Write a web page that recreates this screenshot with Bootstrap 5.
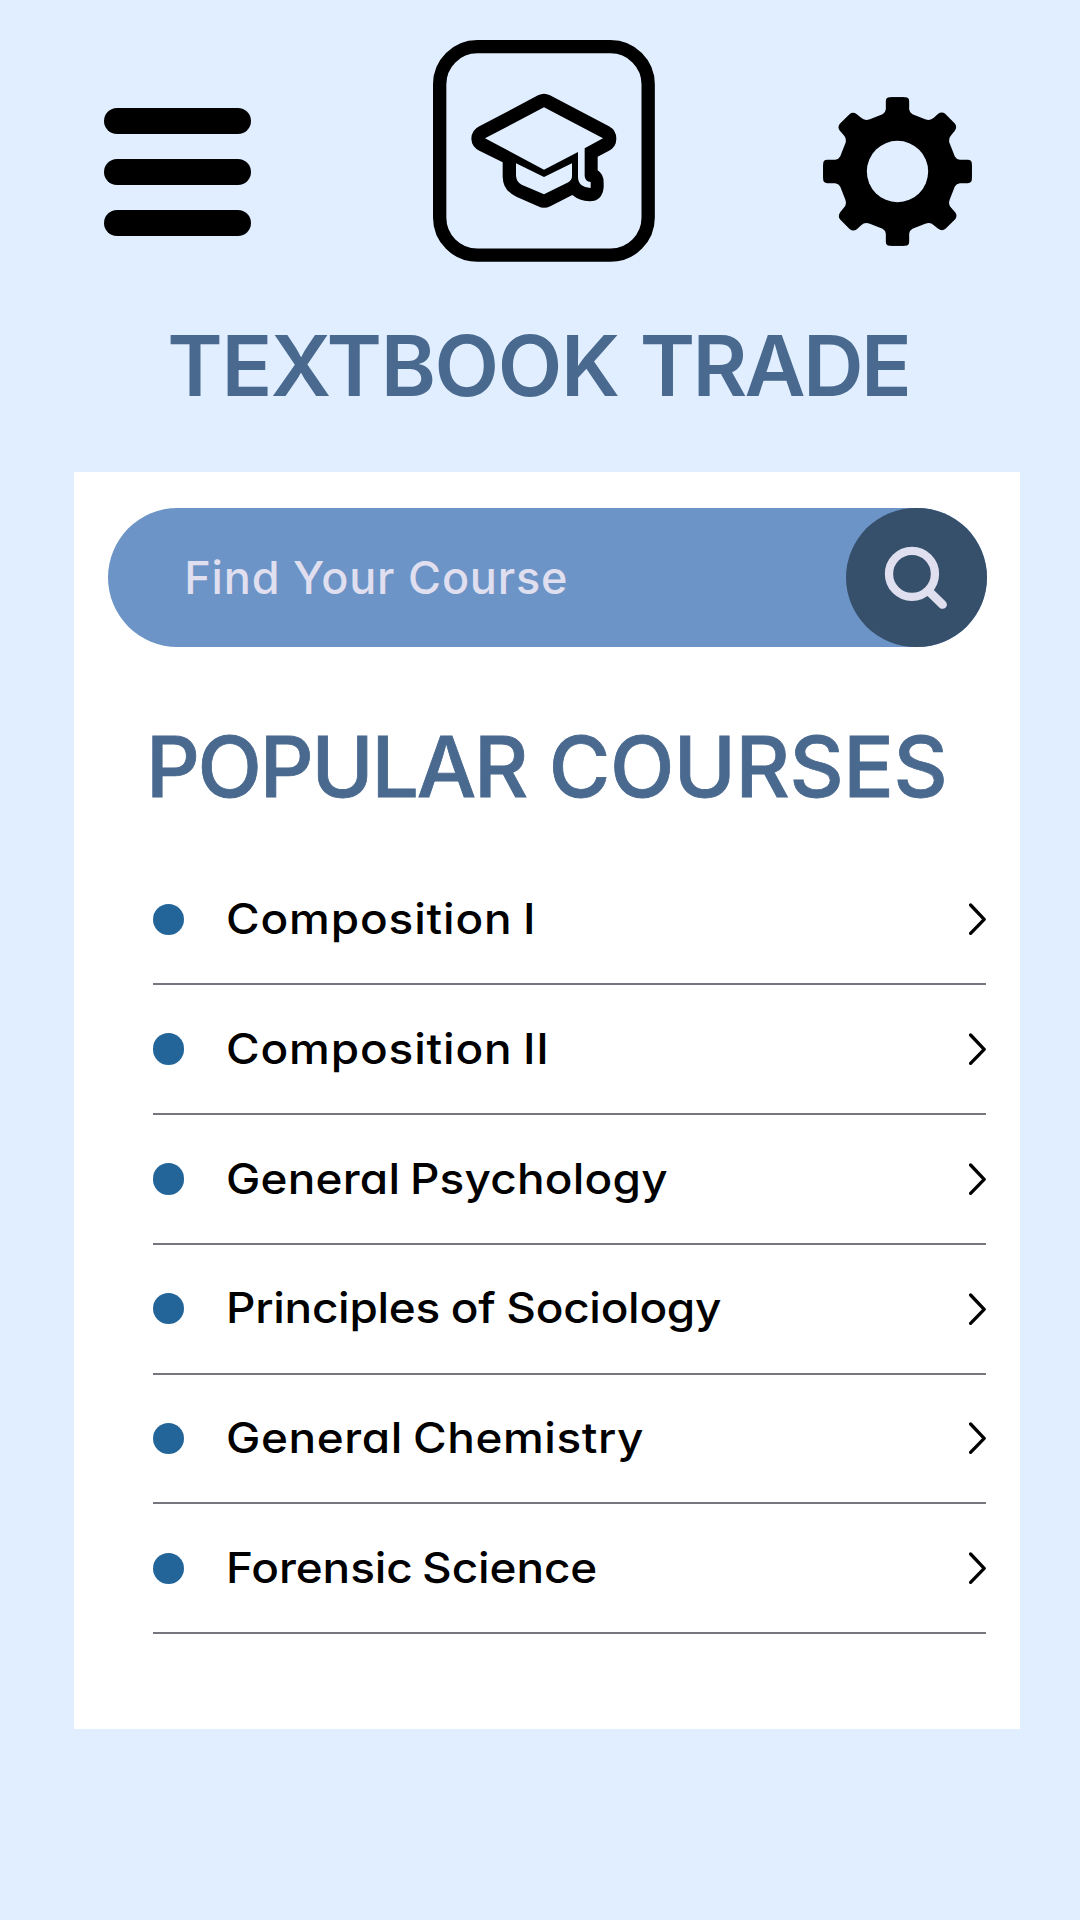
<!DOCTYPE html>
<html lang="en">
<head>
<meta charset="utf-8">
<meta name="viewport" content="width=device-width, initial-scale=1">
<title>Textbook Trade</title>
<link href="https://cdn.jsdelivr.net/npm/bootstrap@5.3.0/dist/css/bootstrap.min.css" rel="stylesheet">
<style>
  body { background: #e0eeff; font-family: Inter, "Liberation Sans", sans-serif; font-weight: 500; min-height: 1920px; color: #000; }
  svg { display: block; }
  .top-bar { padding: 40px 108px 0 104.4px; height: 262px; }
  .menu-btn { width: 146.8px; margin-top: 68px; }
  .menu-btn span { display: block; height: 26px; border-radius: 13px; background: #000; }
  .menu-btn span + span { margin-top: 25px; }
  .logo-mark { margin-left: 14.500px; }
  .gear-btn { margin-top: 56.500px; }
  .gear-btn, .logo-mark { flex: none; }
  .heading { color: #49698e; font-size: 84px; line-height: 84px; white-space: nowrap; }
  .app-title { font-weight: 600; margin: 61.5px 0 0; padding-right: 3.5px; }
  .app-title .first { letter-spacing: -1.4px; }
  .app-title .second { letter-spacing: -2.7px; }
  .panel { background: #fff; width: 946px; height: 1257px; margin: 64px 0 0 74px; padding: 36px 33.5px 0 33.8px; }
  .search-box { background: #6c94c6; height: 139.8px; }
  .search-box input, .search-box input:focus { background: transparent; font-size: 45px; font-weight: 500; letter-spacing: .8px; padding: 0 0 0 76.5px; color: #e0dfef; }
  .search-box input::placeholder { color: #e0dfef; opacity: 1; }
  .search-btn { width: 140.6px; height: 139.8px; background: #36506b; }
  .sub-title { font-weight: 500; -webkit-text-stroke: .8px #49698e; margin: 78px 0 0; padding-right: 1px; }
  .sub-title .first { letter-spacing: -2.2px; }
  .sub-title .second { letter-spacing: -.45px; }
  .course-list { margin: 46.1px .4px 0 44.9px; }
  .course { height: 129.8px; border-bottom: 2px solid #77757d; font-size: 42.5px; line-height: 1; }
  .course, .course:hover { color: #000; }
  .dot { width: 31.4px; height: 31.4px; background: #236599; margin-right: 42.2px; flex: none; }
  /* wide, single-storey letterforms for the course names */
  .course-name { font-feature-settings: "cv11"; transform: scaleX(1.08); transform-origin: left center; letter-spacing: .8px; word-spacing: -2.5px; margin-right: auto; }
  .ls-psy { letter-spacing: .2px; }
  .ls-soc { letter-spacing: -.25px; word-spacing: -1px; }
  .ls-chem { letter-spacing: .55px; }
  .ls-for { letter-spacing: -.08px; }
</style>
</head>
<body>
<header class="top-bar d-flex justify-content-between align-items-start">
  <button class="menu-btn border-0 bg-transparent p-0" aria-label="Menu"><span></span><span></span><span></span></button>
  <svg class="logo-mark" width="222" height="222" viewBox="40 30 666 666" aria-hidden="true">
    <rect x="60" y="50" width="625.500" height="625.500" rx="113" fill="none" stroke="#000" stroke-width="40"/>
    <path d="M355,196Q373,187 391,196L568,289Q590,301 590,326Q590,350 568,362L534,380V421Q552,432 552,458V472Q548,514 510,514Q478,512 458,495L392,529Q373,538 355,529L290,500Q250,482 249,440V397L179,362Q156,350 155,326Q156,300 179,289Z"/>
    <path fill="#e0eeff" d="M373,232L550,325L495,355V438Q496,455 513,456V474Q476,472 475,442V366L373,419L196,325Z"/>
    <path fill="#e0eeff" d="M289,400L373,441L457,400V438Q457,450 446,457L373,493L306,464Q289,455 289,435Z"/>
  </svg>
  <svg class="gear-btn" width="149" height="149" viewBox="-223.500 -223.500 447 447" aria-hidden="true">
    <defs><path id="quarter" d="M-20-223H23.500Q35-223 35-211V-187Q36-177 45-172L83-157Q98-151 109-161L122-173Q133-181 143-173L172-144Q180-134 172-122L161-109Q151-98 157-83L172-45Q177-36 187-35H211Q223-35 223-23.500V20H-20Z"/></defs>
    <use href="#quarter"/><use href="#quarter" transform="rotate(90)"/><use href="#quarter" transform="rotate(180)"/><use href="#quarter" transform="rotate(270)"/>
    <circle r="92" fill="#e0eeff"/>
  </svg>
</header>

<h1 class="heading app-title text-center"><span class="first">TEXTBOOK</span> <span class="second">TRADE</span></h1>

<main class="panel">
  <form class="search-box rounded-pill d-flex align-items-center">
    <input class="form-control border-0 shadow-none rounded-0" type="text" placeholder="Find Your Course" aria-label="Find Your Course">
    <button type="button" class="search-btn rounded-circle border-0 p-0 flex-shrink-0" aria-label="Search">
      <svg width="140.600" height="139.800" viewBox="0 0 422 420" fill="none" stroke="#e0dfef">
        <circle cx="198" cy="198" r="69" stroke-width="25"/>
        <path d="M253 254L290 290" stroke-width="26" stroke-linecap="round"/>
      </svg>
    </button>
  </form>

  <h2 class="heading sub-title text-center"><span class="first">POPULAR</span> <span class="second">COURSES</span></h2>

  <nav class="course-list d-flex flex-column">
    <a class="course d-flex align-items-center text-decoration-none"><span class="dot rounded-circle"></span><span class="course-name">Composition I</span><svg width="17" height="32" viewBox="0 0 17 32" fill="none" stroke="#000" stroke-width="3.300" stroke-linecap="round" stroke-linejoin="round"><path d="M1.600 2L15.200 16.300L1.600 30.400"/></svg></a>
    <a class="course d-flex align-items-center text-decoration-none"><span class="dot rounded-circle"></span><span class="course-name">Composition II</span><svg width="17" height="32" viewBox="0 0 17 32" fill="none" stroke="#000" stroke-width="3.300" stroke-linecap="round" stroke-linejoin="round"><path d="M1.600 2L15.200 16.300L1.600 30.400"/></svg></a>
    <a class="course d-flex align-items-center text-decoration-none"><span class="dot rounded-circle"></span><span class="course-name ls-psy">General Psychology</span><svg width="17" height="32" viewBox="0 0 17 32" fill="none" stroke="#000" stroke-width="3.300" stroke-linecap="round" stroke-linejoin="round"><path d="M1.600 2L15.200 16.300L1.600 30.400"/></svg></a>
    <a class="course d-flex align-items-center text-decoration-none"><span class="dot rounded-circle"></span><span class="course-name ls-soc">Principles of Sociology</span><svg width="17" height="32" viewBox="0 0 17 32" fill="none" stroke="#000" stroke-width="3.300" stroke-linecap="round" stroke-linejoin="round"><path d="M1.600 2L15.200 16.300L1.600 30.400"/></svg></a>
    <a class="course d-flex align-items-center text-decoration-none"><span class="dot rounded-circle"></span><span class="course-name ls-chem">General Chemistry</span><svg width="17" height="32" viewBox="0 0 17 32" fill="none" stroke="#000" stroke-width="3.300" stroke-linecap="round" stroke-linejoin="round"><path d="M1.600 2L15.200 16.300L1.600 30.400"/></svg></a>
    <a class="course d-flex align-items-center text-decoration-none"><span class="dot rounded-circle"></span><span class="course-name ls-for">Forensic Science</span><svg width="17" height="32" viewBox="0 0 17 32" fill="none" stroke="#000" stroke-width="3.300" stroke-linecap="round" stroke-linejoin="round"><path d="M1.600 2L15.200 16.300L1.600 30.400"/></svg></a>
  </nav>
</main>
<script src="https://cdn.jsdelivr.net/npm/bootstrap@5.3.0/dist/js/bootstrap.bundle.min.js"></script>
</body>
</html>
